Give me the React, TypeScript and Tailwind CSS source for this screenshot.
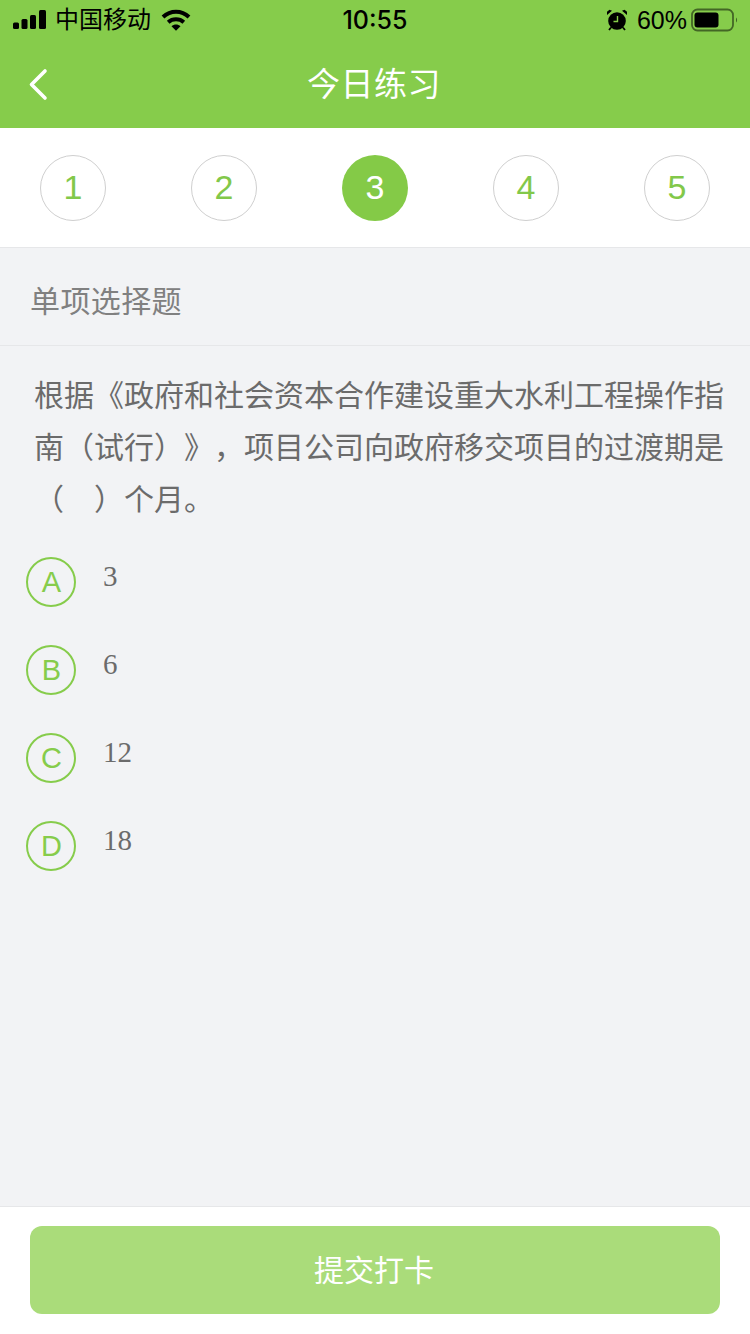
const SANS = "font-['Liberation_Sans','Noto_Sans_CJK_SC',sans-serif]";

const steps = ["1", "2", "3", "4", "5"];
const options = [
  { key: "A", text: "3" },
  { key: "B", text: "6" },
  { key: "C", text: "12" },
  { key: "D", text: "18" },
];

function SignalIcon() {
  return (
    <svg width="34" height="20" viewBox="0 0 34 20" fill="#000">
      <rect x="0" y="12.5" width="6" height="6.5" rx="1.5" />
      <rect x="8.5" y="9" width="6" height="10" rx="1.5" />
      <rect x="17" y="5" width="6" height="14" rx="1.5" />
      <rect x="26" y="0" width="7" height="19" rx="1.5" />
    </svg>
  );
}

function WifiIcon() {
  return (
    <svg width="30" height="22" viewBox="0 0 30 22" fill="none" stroke="#000" strokeWidth="4">
      <path d="M2 8C9.5 1 20.5 1 28 8" />
      <path d="M7.2 13.2C11.5 9.4 18.5 9.4 22.8 13.2" />
      <path d="M10.5 17.2L15 21.8L19.5 17.2C17 15 13 15 10.5 17.2Z" fill="#000" stroke="none" />
    </svg>
  );
}

function AlarmIcon() {
  return (
    <svg width="22" height="22" viewBox="0 0 22 22">
      <circle cx="11" cy="12" r="8.8" fill="#000" />
      <path d="M1 6L6 1.8L3.5 0.8L1 2.8Z M21 6L16 1.8L18.5 0.8L21 2.8Z" fill="#000" />
      <path d="M5 18.5L3 21M17 18.5L19 21" stroke="#000" strokeWidth="1.8" />
      <path d="M11.5 7V12.5H7.5" stroke="#86cd4a" strokeWidth="1.4" fill="none" />
    </svg>
  );
}

function BatteryIcon() {
  return (
    <svg width="47" height="24" viewBox="0 0 47 24" fill="none">
      <rect x="1" y="1.5" width="41" height="21" rx="5.5" stroke="#000" strokeOpacity="0.5" strokeWidth="1.8" />
      <rect x="3.5" y="4.5" width="24" height="15" rx="3" fill="#000" />
      <path d="M45 9.5C46.4 10.2 46.4 13.8 45 14.5Z" fill="#000" fillOpacity="0.5" />
    </svg>
  );
}

function BackIcon() {
  return (
    <svg width="22" height="34" viewBox="0 0 22 34" fill="none" stroke="#fff" strokeWidth="3.6" strokeLinecap="round" strokeLinejoin="round">
      <path d="M17 3L3.5 16.5L17 30" />
    </svg>
  );
}

export default function App() {
  return (
    <div className={`w-[750px] h-[1334px] flex flex-col bg-[#f2f3f5] overflow-hidden ${SANS}`}>
      <header className="h-[128px] shrink-0 bg-[#86cc4b] flex flex-col">
        <div className="h-[40px] px-[13px] flex items-center justify-between relative text-black">
          <div className="flex items-center">
            <SignalIcon />
            <span className="text-[24px] leading-none ml-[8px]">中国移动</span>
            <span className="ml-[10px] flex"><WifiIcon /></span>
          </div>
          <span className="absolute left-0 right-0 text-center text-[25px] leading-none font-medium font-['Inter',sans-serif] pointer-events-none">10:55</span>
          <div className="flex items-center">
            <AlarmIcon />
            <span className="ml-[9px] text-[25px] leading-none">60%</span>
            <span className="ml-[4px] -mr-[1px] flex"><BatteryIcon /></span>
          </div>
        </div>
        <div className="flex-1 relative flex items-center justify-center pt-[1px] pr-[2px]">
          <span className="absolute left-[28px] top-[28px] flex"><BackIcon /></span>
          <h1 className="text-[33px] leading-none font-normal text-white tracking-[0.5px]">今日练习</h1>
        </div>
      </header>

      <nav className="h-[120px] shrink-0 bg-white border-b border-[#e6e7e9] px-[40px] flex items-center justify-between">
        {steps.map((step) => (
          <div
            key={step}
            className={
              step === "3"
                ? "w-[66px] h-[66px] rounded-full bg-[#84ca47] text-white text-[34px] flex items-center justify-center"
                : "w-[66px] h-[66px] rounded-full border border-[#cfcfcf] text-[#82c84a] text-[34px] flex items-center justify-center"
            }
          >
            {step}
          </div>
        ))}
      </nav>

      <div className="h-[98px] shrink-0 border-b border-[#e6e7e9] pl-[30px] pt-[10px] flex items-center">
        <span className="text-[30px] tracking-[0.4px] text-[#808080]">单项选择题</span>
      </div>

      <main className="flex-1 flex flex-col">
        <p className="pl-[34px] pr-[24px] pt-[24px] text-[30px] leading-[52px] text-[#6b6b6b] [text-spacing-trim:space-all]">
          根据《政府和社会资本合作建设重大水利工程操作指南（试行）》，项目公司向政府移交项目的过渡期是（　）个月。
        </p>
        <ul className="pl-[26px] pt-[31px] flex flex-col gap-[38px]">
          {options.map((option) => (
            <li key={option.key} className="flex items-start">
              <span className="w-[50px] h-[50px] rounded-full border-2 border-[#86cc4b] text-[#86cc4b] text-[29px] pt-[2px] pl-[1px] flex items-center justify-center">
                {option.key}
              </span>
              <span className="ml-[27px] -mt-[2px] text-[29px] leading-[42px] text-[#6b6b6b] font-['Liberation_Serif',serif]">
                {option.text}
              </span>
            </li>
          ))}
        </ul>
      </main>

      <footer className="h-[128px] shrink-0 bg-white border-t border-[#e6e7e9] px-[30px] pt-[19px]">
        <button className="w-full h-[88px] rounded-[12px] bg-[#aadc7a] text-white text-[30px] pr-[2px]">提交打卡</button>
      </footer>
    </div>
  );
}
